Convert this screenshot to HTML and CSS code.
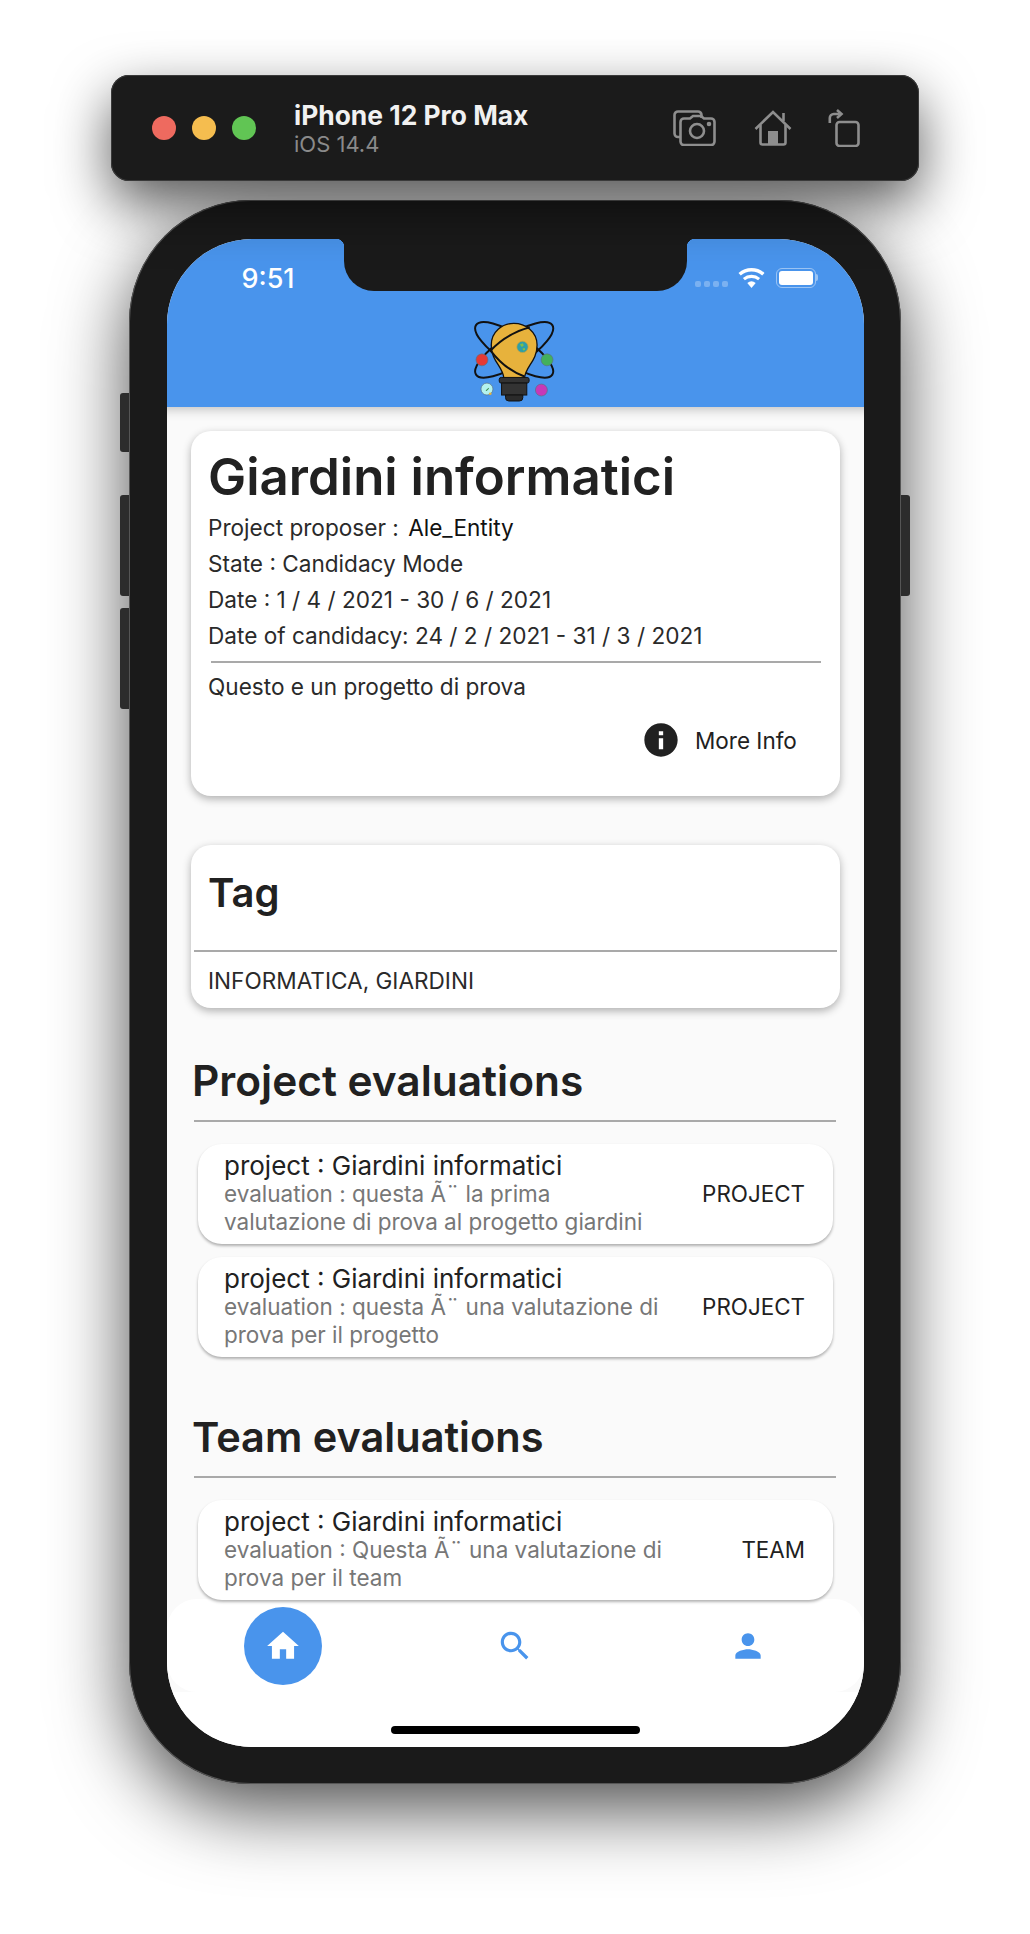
FILE: index.html
```html
<!DOCTYPE html>
<html>
<head>
  <title>Project details</title>
  <link rel="stylesheet" href="styles.css">
</head>
<body>

<!-- Simulator toolbar -->
<div class="toolbar">
  <div class="lights">
    <span class="light red"></span>
    <span class="light yellow"></span>
    <span class="light green"></span>
  </div>
  <div class="device">
    <div class="device-name">iPhone 12 Pro Max</div>
    <div class="device-os">iOS 14.4</div>
  </div>
  <div class="tools">
    <svg class="tool-camera" viewBox="0 0 43 36" fill="none" stroke="#8e8e8e" stroke-width="2.6">
      <path d="M8 27H5a3.5 3.5 0 0 1-3.5-3.5V5A3.5 3.5 0 0 1 5 1.500h20A3.500 3.500 0 0 1 28.500 5v3"/>
      <path d="M11 8.500h6l3-2.500h8l3 2.500h7a3.500 3.500 0 0 1 3.500 3.500v19.500a3.500 3.500 0 0 1-3.500 3.500H11a3.500 3.500 0 0 1-3.500-3.500V12A3.500 3.500 0 0 1 11 8.500z"/>
      <circle cx="24" cy="21" r="7"/>
      <circle cx="36" cy="14" r="1" fill="#8e8e8e"/>
    </svg>
    <svg class="tool-home" viewBox="0 0 38 36" fill="none" stroke="#8e8e8e" stroke-width="2.600">
      <path d="M1.500 19L19 2l17.500 17"/>
      <path d="M6.500 15v17.500a2 2 0 0 0 2 2h21a2 2 0 0 0 2-2V15"/>
      <path d="M29.500 3v8"/>
      <rect x="14" y="21" width="10" height="13.500" fill="#8e8e8e" stroke="none"/>
    </svg>
    <svg class="tool-rotate" viewBox="0 0 32 38" fill="none" stroke="#8e8e8e" stroke-width="2.600">
      <rect x="8.500" y="13" width="22" height="24" rx="3"/>
      <path d="M1.800 14V9a4 4 0 0 1 4-4h6"/>
      <path d="M9 1l4.500 4L9 9"/>
    </svg>
  </div>
</div>

<!-- Phone -->
<div class="phone">
  <span class="side-btn mute"></span>
  <span class="side-btn vol-up"></span>
  <span class="side-btn vol-down"></span>
  <span class="side-btn power"></span>

  <div class="screen">
    <div class="notch"></div>

    <div class="app-bar">
      <div class="status">
        <div class="time">9:51</div>
        <div class="status-icons">
          <div class="signal"><i></i><i></i><i></i><i></i></div>
          <svg class="wifi" viewBox="0 0 27 20" fill="#fff">
            <path d="M13.500 20l-4.200-4.900a6.500 6.500 0 0 1 8.400 0z"/>
            <path d="M6.900 12.300a10.200 10.200 0 0 1 13.200 0l2-2.400a13.300 13.300 0 0 0-17.200 0z"/>
            <path d="M2.800 7.500a16.500 16.500 0 0 1 21.400 0l2.300-2.600a20 20 0 0 0-26 0z"/>
          </svg>
          <div class="battery"><span class="battery-fill"></span></div>
          <span class="battery-tip"></span>
        </div>
      </div>

      <svg class="logo" viewBox="100 60 250 250">
        <ellipse cx="221" cy="150" rx="137" ry="45" transform="rotate(33 221 150)" fill="none" stroke="#111" stroke-width="6"/>
        <ellipse cx="221" cy="150" rx="137" ry="45" transform="rotate(-33 221 150)" fill="none" stroke="#111" stroke-width="6"/>
        <path d="M190 236C188 200 152 185 152 135C152 95 185 70 220 70C255 70 290 95 290 135C290 185 254 200 252 236z" fill="#e7b23c" stroke="#111" stroke-width="4"/>
        <path d="M150 152C180 120 220 95 268 82" fill="none" stroke="#111" stroke-width="6"/>
        <path d="M150 152C175 185 210 215 252 230" fill="none" stroke="#111" stroke-width="6"/>
        <rect x="176" y="233" width="90" height="17" rx="6" fill="#333" stroke="#111" stroke-width="3"/>
        <rect x="183" y="250" width="76" height="36" fill="#333" stroke="#111" stroke-width="3"/>
        <path d="M195 286h52v8a10 10 0 0 1-10 10h-32a10 10 0 0 1-10-10z" fill="#2b2b2b" stroke="#111" stroke-width="3"/>
        <circle cx="246" cy="141" r="17" fill="#2e9fa8" stroke="#c9a13a" stroke-width="2"/>
        <path d="M238 134l9-4 3 7-6 4zM246 146l7-2 1 6-6 2z" fill="#7fbf4a"/>
        <circle cx="124" cy="180" r="18" fill="#e53935" stroke="#5c6f80" stroke-width="2"/>
        <circle cx="320" cy="180" r="18" fill="#43b05c" stroke="#5c6f80" stroke-width="2"/>
        <circle cx="139" cy="268" r="18" fill="#b4f2ee" stroke="#5c6f80" stroke-width="2"/>
        <path d="M135 272l9-8 1 3-7 7z" fill="#3b8a4a"/>
        <circle cx="149" cy="282" r="4" fill="#e7b23c"/>
        <circle cx="303" cy="271" r="18" fill="#c738b8" stroke="#5c6f80" stroke-width="2"/>
      </svg>
    </div>

    <div class="content">
      <div class="card project-card">
        <h1 class="project-title">Giardini informatici</h1>
        <div class="line">Project proposer : <span class="dark">Ale_Entity</span></div>
        <div class="line">State : Candidacy Mode</div>
        <div class="line">Date : 1 / 4 / 2021 - 30 / 6 / 2021</div>
        <div class="line">Date of candidacy: 24 / 2 / 2021 - 31 / 3 / 2021</div>
        <div class="divider project-divider"></div>
        <div class="line">Questo e un progetto di prova</div>
        <div class="more-info">
          <svg class="info-icon" viewBox="0 0 24 24" fill="#212121"><path d="M12 2C6.480 2 2 6.480 2 12s4.480 10 10 10 10-4.480 10-10S17.520 2 12 2zm1.300 15.500h-2.600v-6.500h2.600v6.500zm0-8.300h-2.600V6.700h2.600v2.500z"/></svg>
          <span>More Info</span>
        </div>
      </div>

      <div class="card tag-card">
        <h2 class="tag-title">Tag</h2>
        <div class="divider tag-divider"></div>
        <div class="line tag-list">INFORMATICA, GIARDINI</div>
      </div>

      <h2 class="section-title">Project evaluations</h2>
      <div class="divider section-divider"></div>
      <div class="eval-card">
        <div class="eval-text">
          <div class="eval-title">project : Giardini informatici</div>
          <div class="eval-sub">evaluation : questa Ã¨ la prima<br>valutazione di prova al progetto giardini</div>
        </div>
        <div class="eval-kind">PROJECT</div>
      </div>
      <div class="eval-card">
        <div class="eval-text">
          <div class="eval-title">project : Giardini informatici</div>
          <div class="eval-sub">evaluation : questa Ã¨ una valutazione di<br>prova per il progetto</div>
        </div>
        <div class="eval-kind">PROJECT</div>
      </div>

      <h2 class="section-title team-title">Team evaluations</h2>
      <div class="divider section-divider"></div>
      <div class="eval-card">
        <div class="eval-text">
          <div class="eval-title">project : Giardini informatici</div>
          <div class="eval-sub">evaluation : Questa Ã¨ una valutazione di<br>prova per il team</div>
        </div>
        <div class="eval-kind">TEAM</div>
      </div>
    </div>

    <div class="nav-wrap">
      <div class="nav">
        <div class="nav-item">
          <div class="nav-active">
            <svg class="nav-icon" viewBox="0 0 24 24" fill="#fff"><path d="M10 20v-6h4v6h5v-8h3L12 3 2 12h3v8z"/></svg>
          </div>
        </div>
        <div class="nav-item">
          <svg class="nav-icon" viewBox="0 0 24 24" fill="#4994ec"><path d="M15.500 14h-.79l-.28-.27C15.410 12.590 16 11.110 16 9.500 16 5.910 13.090 3 9.500 3S3 5.910 3 9.500 5.910 16 9.500 16c1.610 0 3.090-.59 4.230-1.570l.27.28v.79l5 4.990L20.490 19l-4.990-5zm-6 0C7.010 14 5 11.990 5 9.500S7.010 5 9.500 5 14 7.010 14 9.500 11.990 14 9.500 14z"/></svg>
        </div>
        <div class="nav-item">
          <svg class="nav-icon" viewBox="0 0 24 24" fill="#4994ec"><path d="M12 12c2.210 0 4-1.790 4-4s-1.790-4-4-4-4 1.790-4 4 1.790 4 4 4zm0 2c-2.670 0-8 1.340-8 4v2h16v-2c0-2.660-5.330-4-8-4z"/></svg>
        </div>
      </div>
    </div>

    <div class="home-area"><div class="home-bar"></div></div>
  </div>
</div>

</body>
</html>
```

FILE: styles.css
```css
* { box-sizing: border-box; }
body {
  margin: 0; padding: 75px 0 0; height: 1934px; overflow: hidden; background: #fff;
  font-family: Inter, "Noto Sans", sans-serif; color: #212121;
  display: flex; flex-direction: column; align-items: center;
}

/* toolbar */
.toolbar {
  position: relative; z-index: 1;
  width: 808px; height: 106px; flex: none; margin-bottom: 19px; padding: 0 0 0 41px;
  display: flex; align-items: center; background: #1b1b1b; border-radius: 18px;
  box-shadow: 0 22px 55px rgba(0,0,0,.65), inset 0 0 0 1px #3a3a3a;
}
.lights { display: flex; gap: 16px; width: 142px; }
.light { width: 24px; height: 24px; border-radius: 50%; }
.red { background: #ee6a5f; }
.yellow { background: #f5bd4f; }
.green { background: #61c554; }
.device { width: 379px; margin-top: 1px; }
.device-name { color: #f1f1f1; font-size: 26.400px; font-weight: 700; line-height: 32px; margin-top: -2px; }
.device-os { color: #8a8a8a; font-size: 22px; line-height: 26px; }
.tools { display: flex; align-items: center; }
.tool-camera { width: 43px; height: 36px; margin-right: 38px; }
.tool-home { width: 38px; height: 36px; margin-right: 36px; }
.tool-rotate { width: 32px; height: 38px; }

/* phone */
.phone {
  position: relative; width: 772px; height: 1584px; flex: none; padding: 39px 37px 37px 38px;
  background: #1a1a1a; border-radius: 122px;
  box-shadow: 0 25px 75px rgba(0,0,0,.7), inset 0 0 0 1px #555;
}
.side-btn { position: absolute; background: #2c2c2c; }
.mute { left: -9px; top: 193px; width: 9px; height: 59px; border-radius: 3px 0 0 3px; }
.vol-up { left: -9px; top: 295px; width: 9px; height: 101px; border-radius: 3px 0 0 3px; }
.vol-down { left: -9px; top: 408px; width: 9px; height: 101px; border-radius: 3px 0 0 3px; }
.power { right: -9px; top: 295px; width: 9px; height: 101px; border-radius: 0 3px 3px 0; }
.screen {
  position: relative; height: 1508px; overflow: hidden; background: #fff; border-radius: 85px;
  display: flex; flex-direction: column;
}
.notch {
  position: absolute; left: 177px; top: 0; width: 343px; height: 52px;
  background: #1a1a1a; border-radius: 0 0 30px 30px;
}
.notch::before, .notch::after {
  content: ""; position: absolute; top: 0; width: 8px; height: 8px;
}
.notch::before { left: -8px; background: radial-gradient(circle at 0 100%, transparent 8px, #1a1a1a 8.500px); }
.notch::after { right: -8px; background: radial-gradient(circle at 100% 100%, transparent 8px, #1a1a1a 8.500px); }

/* app bar */
.app-bar { height: 168px; flex: none; background: #4994ec; display: flex; flex-direction: column; align-items: center; }
.status { width: 100%; height: 81px; padding: 29px 46px 0 72px; display: flex; justify-content: space-between; align-items: flex-start; }
.time { color: #fff; font-size: 27px; font-weight: 500; line-height: 22px; width: 58px; text-align: center; }
.status-icons { display: flex; align-items: flex-start; }
.signal { display: flex; gap: 3px; margin: 13px 10px 0 0; }
.signal i { width: 6px; height: 6px; border-radius: 2px; background: rgba(255,255,255,.28); }
.wifi { width: 27px; height: 20px; margin-right: 11px; }
.battery {
  width: 40px; height: 20px; padding: 2px; border-radius: 6px; border: 1.500px solid rgba(255,255,255,.45);
}
.battery-fill { display: block; height: 100%; background: #fff; border-radius: 3px; }
.battery-tip { width: 2px; height: 7px; margin-top: 6px; background: rgba(255,255,255,.45); border-radius: 0 2px 2px 0; }
.logo { width: 83px; height: 83px; flex: none; }

/* content */
.content {
  position: relative; z-index: 1; flex: 1; min-height: 0;
  background: #fafafa; padding: 24px 24px 0; box-shadow: inset 0 14px 12px -12px rgba(0,0,0,.25);
}
.card { background: #fff; border-radius: 20px; box-shadow: 0 3px 8px rgba(0,0,0,.3); }
.project-card { height: 365px; padding: 17px 17px 0; }
.project-title { margin: 0 0 4px; font-size: 51px; line-height: 58px; font-weight: 600; }
.line { font-size: 22.600px; line-height: 36px; color: #2a2a2a; }
.dark { color: #111; margin-left: 3px; }
.divider { height: 2px; background: #a9a9a9; }
.project-divider { margin: 7px 2px 6px 3px; }
.more-info { display: flex; align-items: center; margin: 15px 0 0 433px; font-size: 22.500px; gap: 14px; }
.info-icon { width: 40px; height: 40px; flex: none; }
.tag-card { height: 163px; margin-top: 49px; padding: 0 3px; }
.tag-title { margin: 0; padding: 19px 14px 0; height: 105px; font-size: 40px; line-height: 58px; font-weight: 600; }
.tag-divider { margin: 0; }
.tag-list { padding: 11px 14px 0; }
.section-title { margin: 48px 0 0 1px; font-size: 42.400px; line-height: 50px; font-weight: 600; }
.team-title { margin-top: 55px; font-size: 41.500px; }
.section-divider { margin: 14px 4px 22px 3px; }
.eval-card {
  display: flex; align-items: center; justify-content: space-between;
  height: 100px; margin: 0 7px 13px; padding: 0 28px 0 26px;
  background: #fff; border-radius: 24px; box-shadow: 0 2px 3px rgba(0,0,0,.3);
}
.eval-title { font-size: 26px; line-height: 28px; color: #212121; }
.eval-sub { font-size: 22.500px; line-height: 28px; color: #777; }
.eval-kind { font-size: 22.400px; color: #212121; margin-top: -2px; }

/* bottom nav */
.nav-wrap { flex: none; background: #fafafa; }
.nav { height: 93px; display: flex; background: #fff; border-radius: 30px; }
.nav-item { flex: 1; display: flex; align-items: center; justify-content: center; }
.nav-active { width: 78px; height: 78px; border-radius: 50%; background: #4994ec; display: flex; align-items: center; justify-content: center; }
.nav-icon { width: 38px; height: 38px; }
.home-area { height: 55px; flex: none; background: #fff; padding-top: 34px; }
.home-bar { width: 249px; height: 8px; margin: 0 auto; background: #000; border-radius: 4px; }
```
